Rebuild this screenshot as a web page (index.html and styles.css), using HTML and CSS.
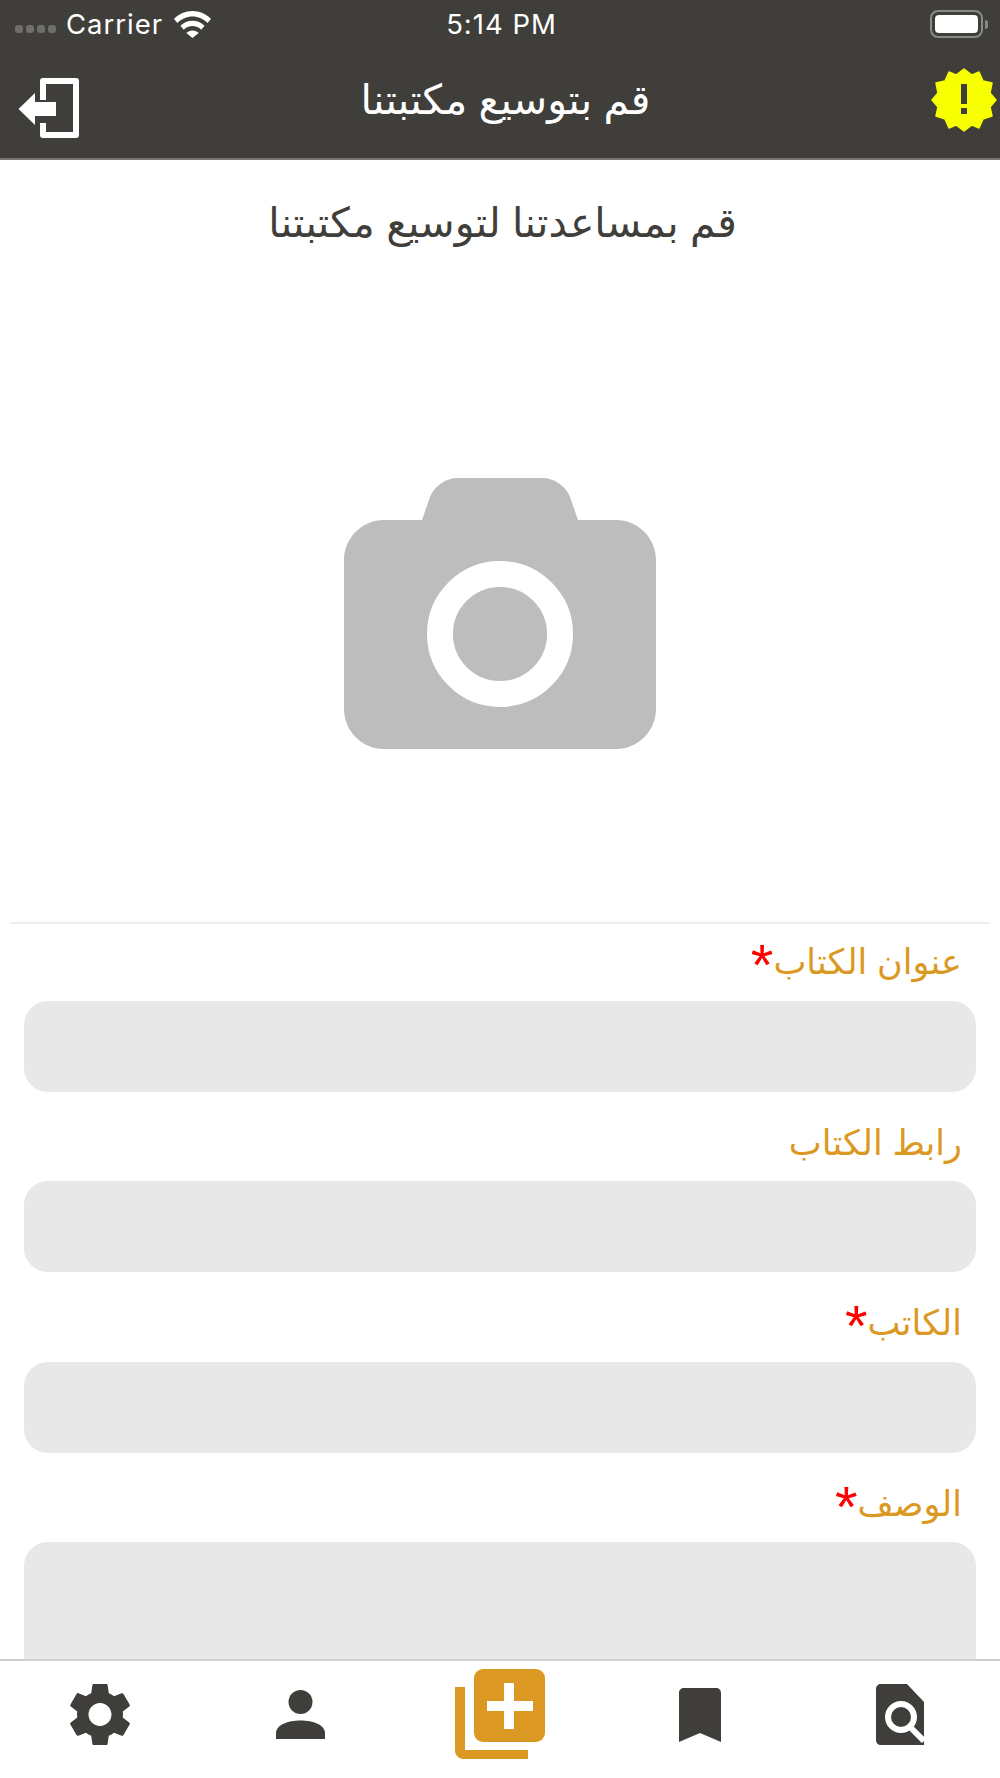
FILE: index.html
```html
<!DOCTYPE html>
<html lang="ar">
<head>
  <meta charset="UTF-8" />
  <meta name="viewport" content="width=device-width, initial-scale=1.0" />
  <title>قم بتوسيع مكتبتنا</title>
  <link rel="stylesheet" href="styles.css">
</head>
<body>
  <div class="app">
    <header class="topbar">
      <div class="status">
        <div class="status-left">
          <span class="dots"><i></i><i></i><i></i><i></i></span>
          <span>Carrier</span>
          <svg class="wifi" viewBox="0 0 36 25" preserveAspectRatio="none"><path d="M18 0C11 0 5 2.700 0 7.300L3.300 11C7.300 7.200 12.400 5 18 5s10.700 2.200 14.700 6L36 7.300C31 2.700 25 0 18 0z"/><path d="M18 9c-4.600 0-8.700 1.700-11.800 4.700l3.300 3.600C11.800 15.200 14.700 14 18 14s6.200 1.200 8.500 3.300l3.300-3.600C26.700 10.700 22.600 9 18 9z"/><path d="M18 18c-2.400 0-4.500.9-6 2.400L18 25l6-4.600C22.500 18.900 20.400 18 18 18z"/></svg>
        </div>
        <div class="status-time">5:14 PM</div>
        <div class="status-right">
          <span class="battery"><span class="battery-fill"></span></span>
          <span class="battery-nub"></span>
        </div>
      </div>
      <nav class="navbar">
        <svg class="exit-icon" viewBox="0 0 62 60"><path d="M25 22V3h33v54H25V45" fill="none" stroke="#fff" stroke-width="6" stroke-linejoin="round"/><path d="M0.500 31L17 15v9h21v14H17v9z" fill="#fff"/></svg>
        <h1 class="nav-title">قم بتوسيع مكتبتنا</h1>
        <svg class="alert-icon" viewBox="0 0 66 66"><polygon fill="#f8ff00" stroke="#f8ff00" stroke-width="1.500" stroke-linejoin="round" points="65,33 59,40 61,49 52,52 48,61 41,58 33,64 25,58 18,61 14,52 5,49 7,40 1,33 7,26 5,16 14,14 18,5 25,8 33,2 41,8 48,5 52,14 61,16 59,26"/><path fill="#3f3e3a" d="M30 17h6v20h-6zM30 41h6v6h-6z"/></svg>
      </nav>
    </header>

    <main class="content">
      <h2 class="subtitle">قم بمساعدتنا لتوسيع مكتبتنا</h2>
      <div class="photo">
        <svg class="camera" viewBox="0 0 312 271">
          <path fill="#bdbdbd" d="M78 42l8-23C90 8 102 0 114 0h84c12 0 24 8 28 19l8 23h38c22 0 40 18 40 40v149c0 22-18 40-40 40H40c-22 0-40-18-40-40V82c0-22 18-40 40-40z"/>
          <circle cx="156" cy="156" r="60" fill="none" stroke="#fff" stroke-width="26"/>
        </svg>
      </div>
      <form class="form" dir="rtl">
        <div class="field">
          <label class="field-label">عنوان الكتاب<span class="req">*</span></label>
          <input class="field-input" type="text" />
        </div>
        <div class="field">
          <label class="field-label">رابط الكتاب</label>
          <input class="field-input" type="text" />
        </div>
        <div class="field">
          <label class="field-label">الكاتب<span class="req">*</span></label>
          <input class="field-input" type="text" />
        </div>
        <div class="field">
          <label class="field-label">الوصف<span class="req">*</span></label>
          <textarea class="field-input field-area"></textarea>
        </div>
      </form>
    </main>

    <footer class="tabbar">
      <div class="tab">
        <svg class="tab-gear" viewBox="2.600 2.500 18.800 19" fill="#3f3e3a"><path d="M19.140 12.940c.04-.3.06-.61.06-.94 0-.32-.02-.64-.07-.94l2.030-1.580c.18-.14.23-.41.12-.61l-1.920-3.320c-.12-.22-.37-.29-.59-.22l-2.390.96c-.5-.38-1.030-.7-1.620-.94l-.36-2.540c-.04-.24-.24-.41-.48-.41h-3.840c-.24 0-.43.17-.47.41l-.36 2.540c-.59.24-1.130.57-1.620.94l-2.390-.96c-.22-.08-.47 0-.59.22L2.740 8.870c-.12.21-.08.47.12.61l2.030 1.580c-.05.3-.09.63-.09.94s.02.64.07.94l-2.030 1.580c-.18.14-.23.41-.12.61l1.920 3.320c.12.22.37.29.59.22l2.390-.96c.5.38 1.030.7 1.620.94l.36 2.540c.05.24.24.41.48.41h3.840c.24 0 .44-.17.47-.41l.36-2.540c.59-.24 1.130-.56 1.620-.94l2.390.96c.22.08.47 0 .59-.22l1.920-3.320c.12-.22.07-.47-.12-.61l-2.010-1.580zM12 15.600c-1.980 0-3.600-1.620-3.600-3.600s1.620-3.600 3.600-3.600 3.600 1.620 3.600 3.600-1.620 3.600-3.600 3.600z"/></svg>
      </div>
      <div class="tab">
        <svg class="tab-person" viewBox="0 0 49 49" fill="#3f3e3a"><circle cx="24.500" cy="12" r="12"/><path d="M0 49v-6c0-8 12-12.500 24.500-12.500S49 35 49 43v6z"/></svg>
      </div>
      <div class="tab">
        <svg class="tab-add" viewBox="0 0 91 91"><path fill="#db9923" d="M0 18h10v63h63v9H8c-4 0-8-4-8-8z"/><rect x="19" y="0" width="71" height="73" rx="9" fill="#db9923"/><path fill="#fff" d="M49 14h10v18h19v10H59v18H49V42H32V32h17z"/></svg>
      </div>
      <div class="tab">
        <svg class="tab-mark" viewBox="0 0 42 54" fill="#3f3e3a"><path d="M0 5c0-3 2-5 5-5h32c3 0 5 2 5 5v49l-21-9-21 9z"/></svg>
      </div>
      <div class="tab">
        <svg class="tab-file" viewBox="0 0 48 61"><path fill="#3f3e3a" d="M5 0h26l17 18v43H5c-3 0-5-2-5-5V5c0-3 2-5 5-5z"/><circle cx="25" cy="33" r="13" fill="none" stroke="#fff" stroke-width="6"/><path d="M34 43l14 14" stroke="#fff" stroke-width="6"/></svg>
      </div>
    </footer>
  </div>
</body>
</html>
```

FILE: styles.css
```css
* {
  box-sizing: border-box;
}
body {
  margin: 0;
  font-family: "Liberation Sans", "DejaVu Sans", sans-serif;
  background: #fff;
}
.app {
  display: flex;
  flex-direction: column;
  width: 1000px;
  height: 1778px;
  overflow: hidden;
}
.topbar {
  flex: none;
  height: 160px;
  background: #3f3e3a;
  border-bottom: 2px solid #77766f;
  color: #fff;
}
.status {
  display: grid;
  grid-template-columns: 1fr auto 1fr;
  align-items: center;
  height: 48px;
  padding: 0 12px 0 15px;
  font-family: Inter, "Liberation Sans", sans-serif;
  font-size: 27.500px;
  letter-spacing: 1px;
}
.status-left {
  display: flex;
  align-items: center;
}
.dots {
  display: flex;
  gap: 3px;
  margin: 10px 10px 0 0;
}
.dots i {
  width: 8px;
  height: 8px;
  border-radius: 3px;
  background: #6f6e69;
}
.wifi {
  width: 37px;
  height: 27px;
  margin-left: 11px;
  fill: #fff;
}
.status-right {
  display: flex;
  align-items: center;
  justify-content: flex-end;
}
.battery {
  display: block;
  width: 53px;
  height: 28px;
  padding: 3px;
  border: 2px solid #8b8a85;
  border-radius: 8px;
}
.battery-fill {
  display: block;
  height: 100%;
  border-radius: 4px;
  background: #fff;
}
.battery-nub {
  width: 3px;
  height: 9px;
  margin-left: 2px;
  border-radius: 0 3px 3px 0;
  background: #8b8a85;
}
.navbar {
  display: flex;
  align-items: center;
  justify-content: space-between;
  height: 110px;
  padding: 0 3px 6px 18px;
}
.exit-icon {
  width: 62px;
  height: 60px;
  margin-top: 16px;
}
.alert-icon {
  width: 66px;
  height: 66px;
}
.nav-title {
  margin: 0;
  font-size: 41px;
  font-weight: 400;
}
.content {
  flex: 1;
  min-height: 0;
  overflow: hidden;
}
.subtitle {
  margin: 0;
  padding: 38px 0 0 5px;
  height: 130px;
  text-align: center;
  font-size: 41px;
  font-weight: 400;
  line-height: 50px;
  color: #3f3e3a;
}
.photo {
  height: 634px;
  margin: 0 10px;
  padding-top: 188px;
  border-bottom: 2px solid #eee;
  text-align: center;
}
.camera {
  width: 312px;
  height: 271px;
}
.form {
  padding: 0 24px;
}
.field {
  margin-bottom: 13px;
}
.field-label {
  display: block;
  height: 76.500px;
  padding: 0 14px;
  font-size: 35px;
  line-height: 76px;
  color: #db9923;
}
.req {
  font-size: 58px;
  line-height: 0;
  vertical-align: -11px;
  color: #f00;
}
.field-input {
  display: block;
  width: 100%;
  height: 91px;
  border: 0;
  border-radius: 24px;
  background: #e8e8e8;
}
.field-area {
  height: 220px;
  resize: none;
}
.tabbar {
  display: grid;
  grid-template-columns: repeat(5, 1fr);
  flex: none;
  height: 119px;
  padding-bottom: 10px;
  border-top: 2px solid #cfcfcf;
  background: #fff;
}
.tab {
  display: flex;
  align-items: center;
  justify-content: center;
}
.tab-gear {
  width: 60px;
  height: 61px;
}
.tab-person {
  width: 49px;
  height: 49px;
}
.tab-add {
  width: 91px;
  height: 91px;
}
.tab-mark {
  width: 42px;
  height: 54px;
}
.tab-file {
  width: 48px;
  height: 61px;
}
```
